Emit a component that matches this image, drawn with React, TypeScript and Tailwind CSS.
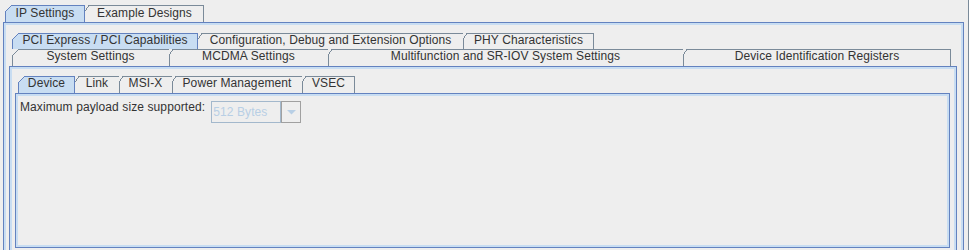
import React from "react";

const SEL = "#6382bf";
const UNSEL = "#7a8a99";

type TabProps = {
  label: string;
  w: string;
  h: string;
  lead: string;
  selected?: boolean;
  first?: boolean;
  last?: boolean;
  noLeft?: boolean;
};

function Tab({ label, w, h, lead, selected, first, last, noLeft }: TabProps) {
  const color = selected ? SEL : UNSEL;
  const lineCls = selected ? "bg-[#6382bf]" : "bg-[#7a8a99]";
  const slant: [number, number][] = first
    ? [
        [1, 5],
        [2, 4],
        [3, 3],
        [4, 2],
        [5, 1],
        [6, 0],
      ]
    : [
        [0, 5],
        [1, 4],
        [1, 3],
        [2, 2],
        [3, 1],
        [3, 0],
      ];
  return (
    <div className={`relative shrink-0 ${w} ${h} text-center ${lead} whitespace-nowrap`}>
      {selected && (
        <div className="absolute inset-0 bg-[#c8ddf2] [clip-path:polygon(7px_0,100%_0,100%_100%,0_100%,0_7px)]" />
      )}
      <div className={`absolute top-0 right-0 h-px ${first ? "left-[6px]" : "left-[4px]"} ${lineCls}`} />
      {!noLeft && <div className={`absolute left-0 top-[6px] bottom-0 w-px ${lineCls}`} />}
      {(last || selected) && <div className={`absolute right-0 top-0 bottom-0 w-px ${lineCls}`} />}
      <svg className="absolute left-0 top-0" width="7" height="7" shapeRendering="crispEdges">
        {slant.map(([x, y], i) => (
          <rect key={i} x={x} y={y} width="1" height="1" fill={color} />
        ))}
      </svg>
      <span className="relative">{label}</span>
    </div>
  );
}

export default function App() {
  return (
    <div className="w-[969px] h-[250px] overflow-hidden bg-[#eeeeee] border-r border-[#7a8a99] pl-[3px] pr-[4px] pt-[5px] font-['Liberation_Sans',Arial,sans-serif] text-[12px] tracking-[0.1px] text-[#333333]">
      {/* Level 1 tabs */}
      <div className="flex ml-[2px]">
        <Tab label="IP Settings" w="w-[80px]" h="h-[17px]" lead="leading-[16px]" selected first />
        <Tab label="Example Designs" w="w-[119px]" h="h-[17px]" lead="leading-[16px]" last noLeft />
      </div>
      {/* Level 1 pane */}
      <div className="border border-[#6382bf]">
        <div className="border-2 border-[#c8ddf2] pl-[3px] pr-[4px] pt-[8px] h-[300px]">
          {/* Level 2 tab rows */}
          <div className="flex ml-[3px]">
            <Tab label="PCI Express / PCI Capabilities" w="w-[186px]" h="h-[16px]" lead="leading-[15px]" selected first />
            <Tab label="Configuration, Debug and Extension Options" w="w-[265px]" h="h-[16px]" lead="leading-[15px]" noLeft />
            <Tab label="PHY Characteristics" w="w-[131px]" h="h-[16px]" lead="leading-[15px]" last />
          </div>
          <div className="flex ml-[3px] mr-[6px]">
            <Tab label="System Settings" w="w-[157px]" h="h-[17px]" lead="leading-[15px]" first />
            <Tab label="MCDMA Settings" w="w-[159px]" h="h-[17px]" lead="leading-[15px]" />
            <Tab label="Multifunction and SR-IOV System Settings" w="w-[355px]" h="h-[17px]" lead="leading-[15px]" />
            <Tab label="Device Identification Registers" w="w-[268px]" h="h-[17px]" lead="leading-[15px]" last />
          </div>
          {/* Level 2 pane */}
          <div className="border border-[#6382bf]">
            <div className="border-2 border-[#c8ddf2] pl-[3px] pr-[4px] pt-[7px] h-[250px]">
              {/* Level 3 tabs */}
              <div className="flex ml-[3px]">
                <Tab label="Device" w="w-[57px]" h="h-[17px]" lead="leading-[15px]" selected first />
                <Tab label="Link" w="w-[44px]" h="h-[17px]" lead="leading-[15px]" noLeft />
                <Tab label="MSI-X" w="w-[53px]" h="h-[17px]" lead="leading-[15px]" />
                <Tab label="Power Management" w="w-[130px]" h="h-[17px]" lead="leading-[15px]" />
                <Tab label="VSEC" w="w-[53px]" h="h-[17px]" lead="leading-[15px]" last />
              </div>
              {/* Level 3 pane */}
              <div className="border border-[#6382bf] h-[155px]">
                <div className="border-2 border-[#c8ddf2] h-full pl-[2px] pt-[4px]">
                  <div className="flex items-start">
                    <span className="leading-[15px] whitespace-nowrap">Maximum payload size supported:</span>
                    <div className="flex ml-[6px] mt-[1px] h-[22px]">
                      <div className="w-[70px] border border-[#a3b8cc] flex items-center pl-[1px] text-[#b8cfe5] leading-[15px]">
                        512 Bytes
                      </div>
                      <div className="w-[20px] border border-[#a0a0a0] flex items-center justify-center">
                        <svg width="9" height="5" viewBox="0 0 9 5">
                          <polygon points="0,0 9,0 4.5,4.5" fill="#b8cfe5" />
                        </svg>
                      </div>
                    </div>
                  </div>
                </div>
              </div>
            </div>
          </div>
        </div>
      </div>
    </div>
  );
}
